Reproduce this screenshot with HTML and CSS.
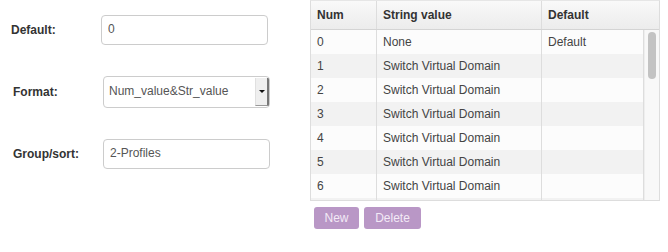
FILE: index.html
```html
<!DOCTYPE html>
<html lang="en">

<head>
    <meta charset="UTF-8">
    <title>Enum properties</title>
    <link rel="stylesheet" href="styles.css">
</head>

<body>
    <div class="page">
        <form class="props">
            <div class="field field-first">
                <label class="field-label">Default:</label>
                <input class="field-input" type="text" value="0">
            </div>
            <div class="field">
                <label class="field-label">Format:</label>
                <div class="select">
                    <span class="select-value">Num_value&amp;Str_value</span>
                    <span class="select-button"><span class="caret"></span></span>
                </div>
            </div>
            <div class="field">
                <label class="field-label">Group/sort:</label>
                <input class="field-input" type="text" value="2-Profiles">
            </div>
        </form>

        <div class="values">
            <div class="grid">
                <div class="grid-head">
                    <div class="cell">Num</div>
                    <div class="cell">String value</div>
                    <div class="cell cell-last">Default</div>
                </div>
                <div class="grid-body">
                    <div class="rows">
                        <div class="row"><div class="cell">0</div><div class="cell">None</div><div class="cell">Default</div></div>
                        <div class="row"><div class="cell">1</div><div class="cell">Switch Virtual Domain</div><div class="cell"></div></div>
                        <div class="row"><div class="cell">2</div><div class="cell">Switch Virtual Domain</div><div class="cell"></div></div>
                        <div class="row"><div class="cell">3</div><div class="cell">Switch Virtual Domain</div><div class="cell"></div></div>
                        <div class="row"><div class="cell">4</div><div class="cell">Switch Virtual Domain</div><div class="cell"></div></div>
                        <div class="row"><div class="cell">5</div><div class="cell">Switch Virtual Domain</div><div class="cell"></div></div>
                        <div class="row"><div class="cell">6</div><div class="cell">Switch Virtual Domain</div><div class="cell"></div></div>
                        <!-- next row peeks in below the fold -->
                        <div class="row"><div class="cell"></div><div class="cell"></div><div class="cell"></div></div>
                    </div>
                    <div class="scroll">
                        <div class="scroll-thumb"></div>
                    </div>
                </div>
            </div>
            <div class="actions">
                <button class="btn btn-new" type="button">New</button>
                <button class="btn btn-delete" type="button">Delete</button>
            </div>
        </div>
    </div>
</body>

</html>
```

FILE: styles.css
```css
body {
    font-family: 'Liberation Sans', Arial, sans-serif;
    font-size: 12px;
    color: #333;
    margin: 0;
    padding: 0;
    background: #fff;
}

.page {
    display: flex;
    align-items: flex-start;
}

/* left form */

.props {
    width: 310px;
    margin: 0;
    padding-top: 15px;
    display: flex;
    flex-direction: column;
    gap: 31px;
}

.field {
    display: flex;
    align-items: center;
    padding-left: 13px;
}

.field-first {
    padding-left: 11px;
}

.field-label {
    width: 90px;
    font-weight: bold;
    color: #333;
}

.field-input {
    box-sizing: border-box;
    width: 167px;
    height: 30px;
    padding: 0 6px 2px;
    border: 1px solid #ccc;
    border-radius: 4px;
    font-family: inherit;
    font-size: 12px;
    color: #555;
}

.select {
    box-sizing: border-box;
    width: 167px;
    height: 32px;
    display: flex;
    align-items: stretch;
    border: 1px solid #ccc;
    border-radius: 4px;
    overflow: hidden;
}

.select-value {
    flex: 1;
    display: flex;
    align-items: center;
    padding-left: 5px;
    padding-bottom: 2px;
    color: #555;
}

.select-button {
    width: 11px;
    margin: 1px 0;
    display: flex;
    align-items: center;
    justify-content: center;
    background: #efefef;
    border-left: 1px solid #e0e0e0;
    border-right: 2px solid #777;
    border-bottom: 1px solid #999;
}

.caret {
    width: 0;
    height: 0;
    border-left: 3px solid transparent;
    border-right: 3px solid transparent;
    border-top: 3px solid #111;
}

/* right grid */

.values {
    width: 350px;
}

.grid {
    border: 1px solid #ddd;
    border-top-color: #e6e6e6;
}

.grid-head {
    display: grid;
    grid-template-columns: 66px 165px 102px;
    height: 28px;
    background: linear-gradient(#f9f9f9, #ececec);
    border-bottom: 1px solid #d4d4d4;
    font-weight: bold;
}

.grid-head .cell {
    display: flex;
    align-items: center;
    padding-left: 6px;
    padding-bottom: 1px;
    border-right: 1px solid #ddd;
}

.grid-head .cell-last {
    border-right: none;
}

.grid-body {
    display: flex;
    height: 170px;
    overflow: hidden;
}

.rows {
    width: 333px;
}

.row {
    display: grid;
    grid-template-columns: 66px 165px 102px;
    height: 24px;
    background: #fcfcfc;
}

.row:nth-child(even) {
    background: #f2f2f2;
}

.row .cell {
    display: flex;
    align-items: center;
    padding-left: 6px;
    border-right: 1px solid #ddd;
    color: #444;
}

.scroll {
    flex: 1;
    background: #f8f8f8;
    border-left: 1px solid #eee;
    padding: 2px 3px 0;
}

.scroll-thumb {
    height: 47px;
    background: #c3c3c3;
    border-radius: 5px;
}

.actions {
    display: flex;
    gap: 5px;
    padding: 6px 0 0 4px;
}

.btn {
    height: 22px;
    padding: 0;
    border: none;
    border-radius: 3px;
    background: #b997c6;
    color: #f3eaf6;
    font-family: inherit;
    font-size: 12px;
    text-align: center;
    cursor: pointer;
}

.btn-new {
    width: 45px;
}

.btn-delete {
    width: 57px;
}
```
